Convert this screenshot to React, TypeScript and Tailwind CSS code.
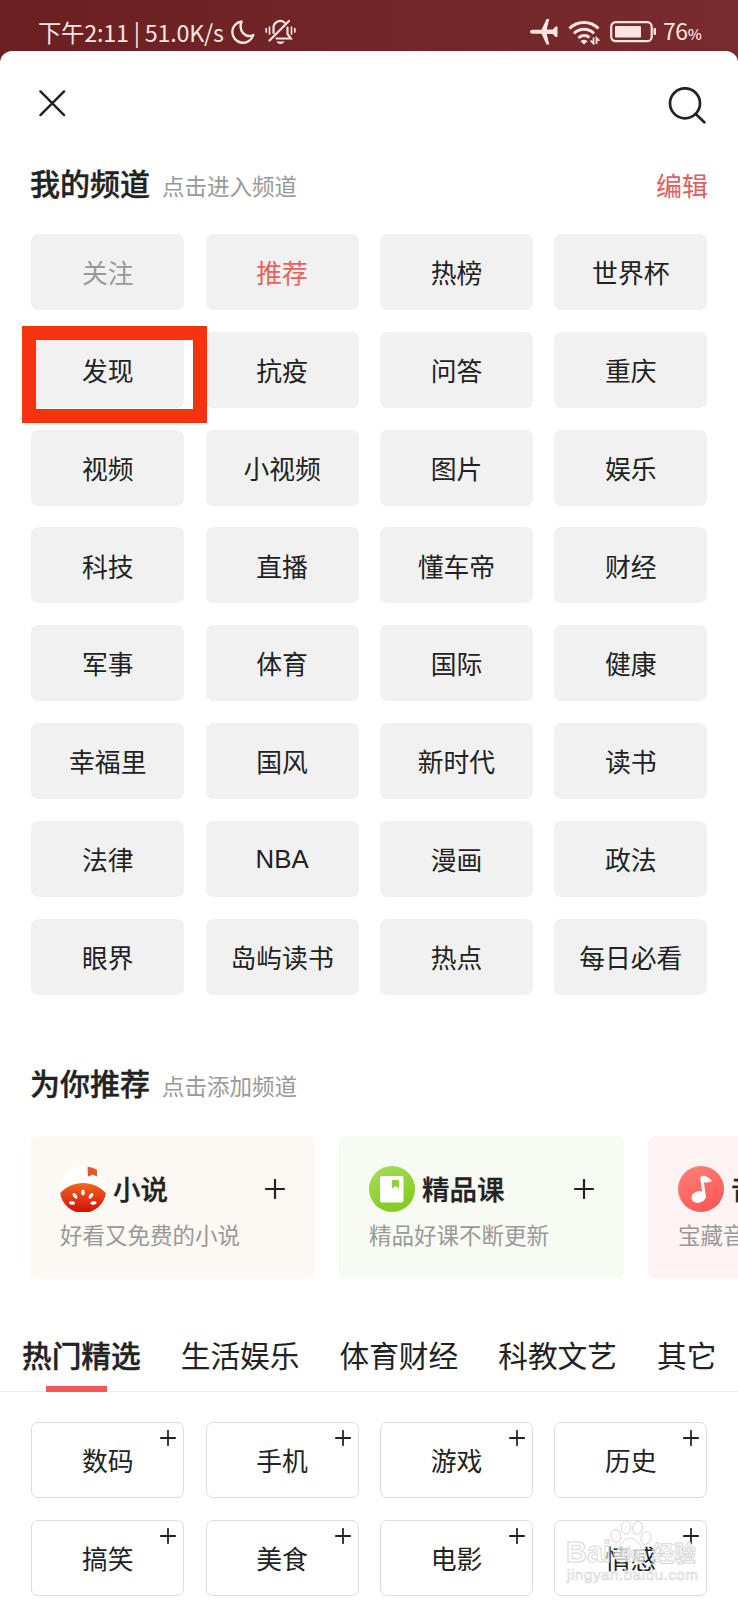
const myChannels = [
  "关注", "推荐", "热榜", "世界杯",
  "发现", "抗疫", "问答", "重庆",
  "视频", "小视频", "图片", "娱乐",
  "科技", "直播", "懂车帝", "财经",
  "军事", "体育", "国际", "健康",
  "幸福里", "国风", "新时代", "读书",
  "法律", "NBA", "漫画", "政法",
  "眼界", "岛屿读书", "热点", "每日必看",
];

const tabs = ["热门精选", "生活娱乐", "体育财经", "科教文艺", "其它"];
const moreChannels = ["数码", "手机", "游戏", "历史", "搞笑", "美食", "电影", "情感"];

const channelColor: Record<string, string> = {
  关注: "text-[#999999]",
  推荐: "text-[#e9605b]",
};

function Plus({ className }: { className: string }) {
  return (
    <svg viewBox="0 0 20 20" className={className} fill="none" stroke="#222" strokeLinecap="round">
      <path d="M10 1v18M1 10h18" strokeWidth="2.2" />
    </svg>
  );
}

function StatusBar() {
  return (
    <div className="flex h-[51px] items-start justify-between pt-[14px] pl-[38px] pr-[36px] text-[#fae5e2]">
      <div className="flex h-[36px] items-center">
        <span className="w-[186px] whitespace-nowrap text-[23.3px] leading-[36px] tracking-[-0.2px]">下午2:11 | 51.0K/s</span>
        <svg viewBox="0 0 24 24" className="ml-[7px] h-[24px] w-[24px]" fill="none" stroke="currentColor" strokeWidth="2.4" strokeLinejoin="round">
          <path d="M10.500 1.500A10.700 10.700 0 1 0 22.300 15C15 18.500 7 11.500 10.500 1.500z" />
        </svg>
        <svg viewBox="0 0 31 26" className="ml-[10px] h-[26px] w-[31px]" fill="none" stroke="currentColor" strokeWidth="2.2" strokeLinecap="round">
          <path d="M1.200 9.500v3.500M4.500 8v7M29.800 9.500v3.500M26.500 8v7" strokeWidth="1.700" />
          <path d="M4.500 21.500 24 2M8.500 14V9a6.800 6.800 0 0 1 11-5.500M22.500 8.500V15l3.300 4.500H11.500" />
          <path d="M11.500 22.500h8c-1 3.300-7 3.300-8 0z" fill="currentColor" stroke="none" />
        </svg>
      </div>
      <div className="flex h-[36px] w-[172px] items-center">
        <svg viewBox="0 0 28 26" className="h-[26px] w-[28px] shrink-0" fill="currentColor">
          <path d="M0 12.800c0-1.300 1-2 3-2h8.500L16.500 0h2.800l-2.600 10.500h6L25.500 7.500h2v10.500h-2L22.700 15h-6l2.600 10.500h-2.800L11.500 14.800H3c-2 0-3-.7-3-2z" />
        </svg>
        <svg viewBox="0 0 32 26" className="ml-[10px] h-[26px] w-[32px] shrink-0" fill="none" stroke="currentColor" strokeWidth="3">
          <path d="M1.500 9.500a20.500 20.500 0 0 1 29 0M6 14.500a14 14 0 0 1 20 0M10.500 19a8 8 0 0 1 11-.5" />
          <path d="m16 25.500-3.500-3.200a5 5 0 0 1 7 0z" fill="currentColor" stroke="none" />
          <path d="M25.500 18.500v6l-2.800-2.800M28.500 25v-6l2.800 2.800" strokeWidth="1.800" />
        </svg>
        <svg viewBox="0 0 47 22" className="ml-[10px] h-[22px] w-[47px] shrink-0">
          <rect x="1.200" y="1.200" width="40.500" height="19" rx="4.500" fill="none" stroke="currentColor" strokeWidth="2.200" />
          <rect x="5" y="5" width="26" height="11.500" rx="1" fill="currentColor" />
          <rect x="43.500" y="7" width="2.500" height="7" rx="1" fill="currentColor" />
        </svg>
        <span className="ml-[6px] text-[23px] leading-[36px] tracking-[-0.4px]">76<span className="text-[15px] font-medium">%</span></span>
      </div>
    </div>
  );
}

function SectionTitle({ title, hint }: { title: string; hint: string }) {
  return (
    <div className="flex items-baseline">
      <h2 className="text-[30px] leading-[40px] font-medium text-[#222] [-webkit-text-stroke:0.4px]">{title}</h2>
      <span className="ml-[12px] text-[22.5px] leading-[34px] text-[#999]">{hint}</span>
    </div>
  );
}

function NovelIcon() {
  return (
    <svg viewBox="0 0 46 46" className="h-[46px] w-[46px]">
      <defs>
        <linearGradient id="novel" x1="0" y1="0" x2="0" y2="1">
          <stop offset="0" stopColor="#f2661f" />
          <stop offset="1" stopColor="#cf0f0a" />
        </linearGradient>
      </defs>
      <circle cx="23" cy="23" r="23" fill="#fff" />
      <path d="M.2 27C12 13.500 34 13.500 45.800 27A23 23 0 0 1 .2 27z" fill="url(#novel)" />
      <path d="M27.500.8Q33 1 37 4v6.500l-4.500-2-4.500 2.200z" fill="#e4572e" />
      <g fill="#fff">
        <ellipse cx="23" cy="26.500" rx="1.700" ry="3" />
        <ellipse cx="15" cy="29.800" rx="1.700" ry="3.200" transform="rotate(-35 15 29.800)" />
        <ellipse cx="31" cy="29.800" rx="1.700" ry="3.200" transform="rotate(35 31 29.800)" />
        <ellipse cx="12" cy="37" rx="1.700" ry="3" transform="rotate(-80 12 37)" />
        <ellipse cx="33.500" cy="37" rx="1.700" ry="3" transform="rotate(80 33.500 37)" />
      </g>
    </svg>
  );
}

function CourseIcon() {
  return (
    <svg viewBox="0 0 46 46" className="h-[46px] w-[46px]">
      <defs>
        <linearGradient id="course" x1="0" y1="0" x2=".5" y2="1">
          <stop offset="0" stopColor="#a9de5c" />
          <stop offset="1" stopColor="#82cb1f" />
        </linearGradient>
      </defs>
      <circle cx="23" cy="23" r="23" fill="url(#course)" />
      <rect x="11" y="10" width="23.500" height="26.500" rx="2" fill="#fff" />
      <path d="M23 14h7v8.500L26.500 20 23 22.500z" fill="#8fd034" />
    </svg>
  );
}

function MusicIcon() {
  return (
    <svg viewBox="0 0 46 46" className="h-[46px] w-[46px] shrink-0">
      <defs>
        <linearGradient id="music" x1="0" y1="0" x2=".5" y2="1">
          <stop offset="0" stopColor="#ff8078" />
          <stop offset="1" stopColor="#ff5a5a" />
        </linearGradient>
      </defs>
      <circle cx="23" cy="23" r="23" fill="url(#music)" />
      <ellipse cx="20.500" cy="31" rx="7.200" ry="5.800" fill="#fff" transform="rotate(-15 20.500 31)" />
      <path d="M26.500 31 23.800 12.500" stroke="#fff" strokeWidth="3" strokeLinecap="round" />
      <path d="M22.300 11.500c2-4 9-.5 11.700 3.500-2 1.700-5.500 1.500-9.500 1.500z" fill="#fff" />
    </svg>
  );
}

const cards = [
  { name: "小说", desc: "好看又免费的小说", bg: "bg-[#fcf8f4]", icon: <NovelIcon /> },
  { name: "精品课", desc: "精品好课不断更新", bg: "bg-[#f7fbf3]", icon: <CourseIcon /> },
  { name: "音乐", desc: "宝藏音乐等你来听", bg: "bg-[#fff4f3]", icon: <MusicIcon /> },
];

function Watermark() {
  return (
    <div className="pointer-events-none absolute top-0 left-[11px] w-[140px]">
      <svg viewBox="0 0 140 66" className="h-[66px] w-[140px]" fill="#fff" stroke="#d8d8d8" strokeWidth="1">
        <g fillOpacity=".7">
          <ellipse cx="50" cy="15" rx="4.800" ry="6.500" transform="rotate(-15 50 15)" />
          <ellipse cx="60" cy="6.500" rx="4.800" ry="6.500" />
          <ellipse cx="71.500" cy="7" rx="4.800" ry="6.500" transform="rotate(10 71.500 7)" />
          <ellipse cx="80" cy="17" rx="4.800" ry="6.500" transform="rotate(20 80 17)" />
          <path d="M64 17c7 0 9 7 14 12 5 6 0 13-6 12-5-1-10-1-15 0-7 1-11-6-6-12 5-5 6-12 13-12z" />
        </g>
        <g fontFamily="Liberation Sans, Noto Sans CJK SC, sans-serif" fontWeight="700" fillOpacity=".6">
          <text x="0" y="41" fontSize="29">Bai</text>
          <text x="55" y="38" fontSize="16">du</text>
          <text x="86" y="40" fontSize="22">经验</text>
          <text x="1" y="59" fontSize="15" fontWeight="400" strokeWidth=".7" textLength="131">jingyan.baidu.com</text>
        </g>
      </svg>
    </div>
  );
}

export default function App() {
  return (
    <div className="h-[1600px] w-[738px] overflow-hidden bg-linear-to-r from-[#6c1f20] to-[#772b2c] font-['Noto_Sans_CJK_SC',sans-serif]">
      <StatusBar />
      <main className="h-[1549px] overflow-hidden rounded-t-[12px] bg-white text-[#222]">
        <header className="flex h-[111px] items-start justify-between pt-[36px] pl-[38.5px] pr-[32.5px]">
          <svg viewBox="0 0 28 28" className="mt-[3px] h-[27px] w-[27px]" fill="none" stroke="#222" strokeWidth="2.500" strokeLinecap="round">
            <path d="M1.500 1.500 26 26M26 1.500 1.500 26" />
          </svg>
          <svg viewBox="0 0 38 38" className="h-[38px] w-[38px]" fill="none" stroke="#222" strokeWidth="2.700" strokeLinecap="round">
            <circle cx="17" cy="16.300" r="15" />
            <path d="m28 27.300 8.300 8" />
          </svg>
        </header>

        <div className="flex h-[72px] items-start justify-between px-[30px]">
          <SectionTitle title="我的频道" hint="点击进入频道" />
          <span className="mt-[4px] text-[26px] leading-[38px] text-[#e0605f]">编辑</span>
        </div>

        <div className="ml-[31.3px] grid w-[676px] grid-cols-4 gap-x-[21.4px] gap-y-[21.8px]">
          {myChannels.map((name) => (
            <div
              key={name}
              className={`relative flex h-[76px] items-center justify-center rounded-[7px] bg-[#f1f1f1] pt-[1px] text-[25.8px] ${channelColor[name] ?? "text-[#222]"}`}
            >
              {name === "NBA" ? <span className="font-['Liberation_Sans',sans-serif]">NBA</span> : name}
              {name === "发现" && (
                <div className="absolute top-[-6px] left-[-9px] z-10 h-[97px] w-[185px] border-[14px] border-[#f5330f]" />
              )}
            </div>
          ))}
        </div>

        <div className="mt-[67px] flex h-[74.5px] px-[30px]">
          <SectionTitle title="为你推荐" hint="点击添加频道" />
        </div>

        <div className="flex gap-[24px] pl-[30px]">
          {cards.map((card) => (
            <div key={card.name} className={`h-[143px] w-[285px] shrink-0 rounded-[7px] pt-[30px] pr-[29.5px] pl-[30px] ${card.bg}`}>
              <div className="flex h-[46px] items-center">
                {card.icon}
                <span className="ml-[7px] text-[27.5px] font-medium whitespace-nowrap [-webkit-text-stroke:0.3px]">{card.name}</span>
                <Plus className="mr-[1px] ml-auto h-[20px] w-[20px]" />
              </div>
              <p className="mt-[5px] text-[22.5px] leading-[34px] whitespace-nowrap text-[#999]">{card.desc}</p>
            </div>
          ))}
        </div>

        <nav className="mt-[53px] flex h-[60px] gap-[40px] border-b border-[#ececec] pl-[22px]">
          {tabs.map((tab, i) => (
            <div key={tab} className="relative shrink-0 text-[29.7px] leading-[46px]">
              <span className={i === 0 ? "font-medium [-webkit-text-stroke:0.4px]" : ""}>{tab}</span>
              {i === 0 && <div className="absolute bottom-[-1px] left-[24px] h-[6px] w-[61px] bg-[#f05b57]" />}
            </div>
          ))}
        </nav>

        <div className="mt-[30px] ml-[31.3px] grid w-[676px] grid-cols-4 gap-x-[21.4px] gap-y-[21.8px]">
          {moreChannels.map((name) => (
            <div key={name} className="relative flex h-[76px] items-center justify-center rounded-[7px] border border-[#dcdcdc] text-[25.8px]">
              {name}
              <Plus className="absolute top-[7px] right-[7px] h-[16px] w-[16px]" />
              {name === "情感" && <Watermark />}
            </div>
          ))}
        </div>
      </main>
    </div>
  );
}
